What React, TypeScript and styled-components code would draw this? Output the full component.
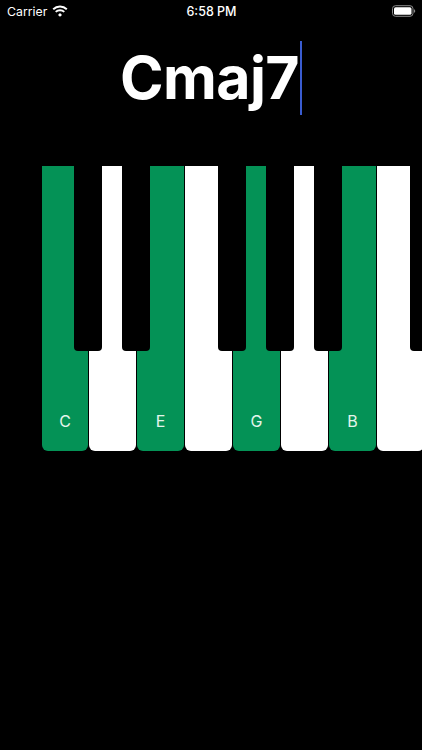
import React from "react";
import styled, { createGlobalStyle } from "styled-components";

const Global = createGlobalStyle`
  html, body { margin: 0; padding: 0; background: #000; }
  body { font-family: Inter, "Liberation Sans", sans-serif; }
`;

const Screen = styled.div`
  width: 422px;
  height: 750px;
  background: #000;
  overflow: hidden;
  display: flex;
  flex-direction: column;
`;

const StatusBar = styled.div`
  height: 22px;
  padding: 0 6px 0 7px;
  display: grid;
  grid-template-columns: 1fr auto 1fr;
  align-items: center;
  color: #fff;
  font-size: 12.3px;
  font-weight: 400;
`;

const Left = styled.div`
  display: flex;
  align-items: center;
  gap: 5px;
`;

const Time = styled.div`
  font-weight: 500;
  font-size: 12.5px;
`;

const Right = styled.div`
  display: flex;
  justify-content: flex-end;
`;

const TitleRow = styled.div`
  height: 144px;
  display: flex;
  justify-content: center;
  align-items: flex-start;
`;

const Title = styled.div`
  margin-top: 19px;
  display: flex;
  align-items: flex-start;
  color: #fff;
  font-size: 59px;
  font-weight: 700;
  line-height: 74px;
  letter-spacing: -0.6px;
`;

const Caret = styled.span`
  width: 2px;
  height: 74px;
  margin-left: 1px;
  background: #3a5cd0;
`;

const Keyboard = styled.div`
  display: flex;
  gap: 1px;
  padding-left: 42px;
  height: 285px;
`;

const WhiteKey = styled.div<{ $on?: boolean }>`
  position: relative;
  flex: 0 0 47px;
  box-sizing: border-box;
  height: 285px;
  background: ${(p) => (p.$on ? "#049256" : "#fff")};
  border-radius: 0 0 6px 6px;
  display: flex;
  justify-content: center;
  align-items: flex-end;
  padding-bottom: 20px;
  color: #e4f5ec;
  font-size: 16px;
  line-height: 20px;
  &:first-child {
    flex-basis: 46px;
  }
`;

const BlackKey = styled.div`
  position: absolute;
  z-index: 1;
  top: 0;
  right: -14px;
  width: 28px;
  height: 185px;
  background: #000;
  border-radius: 0 0 4px 4px;
`;

const Wifi = () => (
  <svg width="16" height="12" viewBox="0 0 16 12" fill="none" stroke="#fff" strokeWidth="1.9">
    <path d="M1.200 4.300C5 .6 11 .6 14.800 4.300" />
    <path d="M3.700 6.900c2.400-2.300 6.200-2.300 8.600 0" />
    <path d="M8 8 6 9.900 8 11.800 10 9.900Z" fill="#fff" stroke="none" />
  </svg>
);

const Battery = () => (
  <svg width="24" height="12" viewBox="0 0 24 12">
    <rect x="0.500" y="0.700" width="20.500" height="10.600" rx="3" fill="none" stroke="#8a8a8a" />
    <rect x="2" y="2.200" width="17.500" height="7.600" rx="1.600" fill="#fff" />
    <path d="M22 4.200c.7.2 1.200.9 1.200 1.800s-.5 1.600-1.200 1.800z" fill="#8a8a8a" />
  </svg>
);

const keys: { label?: string; on?: boolean; black?: boolean }[] = [
  { label: "C", on: true, black: true },
  { black: true },
  { label: "E", on: true },
  { black: true },
  { label: "G", on: true, black: true },
  { black: true },
  { label: "B", on: true },
  { black: true },
];

export default function App() {
  return (
    <Screen>
      <Global />
      <StatusBar>
        <Left>
          Carrier
          <Wifi />
        </Left>
        <Time>6:58 PM</Time>
        <Right>
          <Battery />
        </Right>
      </StatusBar>
      <TitleRow>
        <Title>
          Cmaj7
          <Caret />
        </Title>
      </TitleRow>
      <Keyboard>
        {keys.map((k, i) => (
          <WhiteKey key={i} $on={k.on}>
            {k.label}
            {k.black && <BlackKey />}
          </WhiteKey>
        ))}
      </Keyboard>
    </Screen>
  );
}
